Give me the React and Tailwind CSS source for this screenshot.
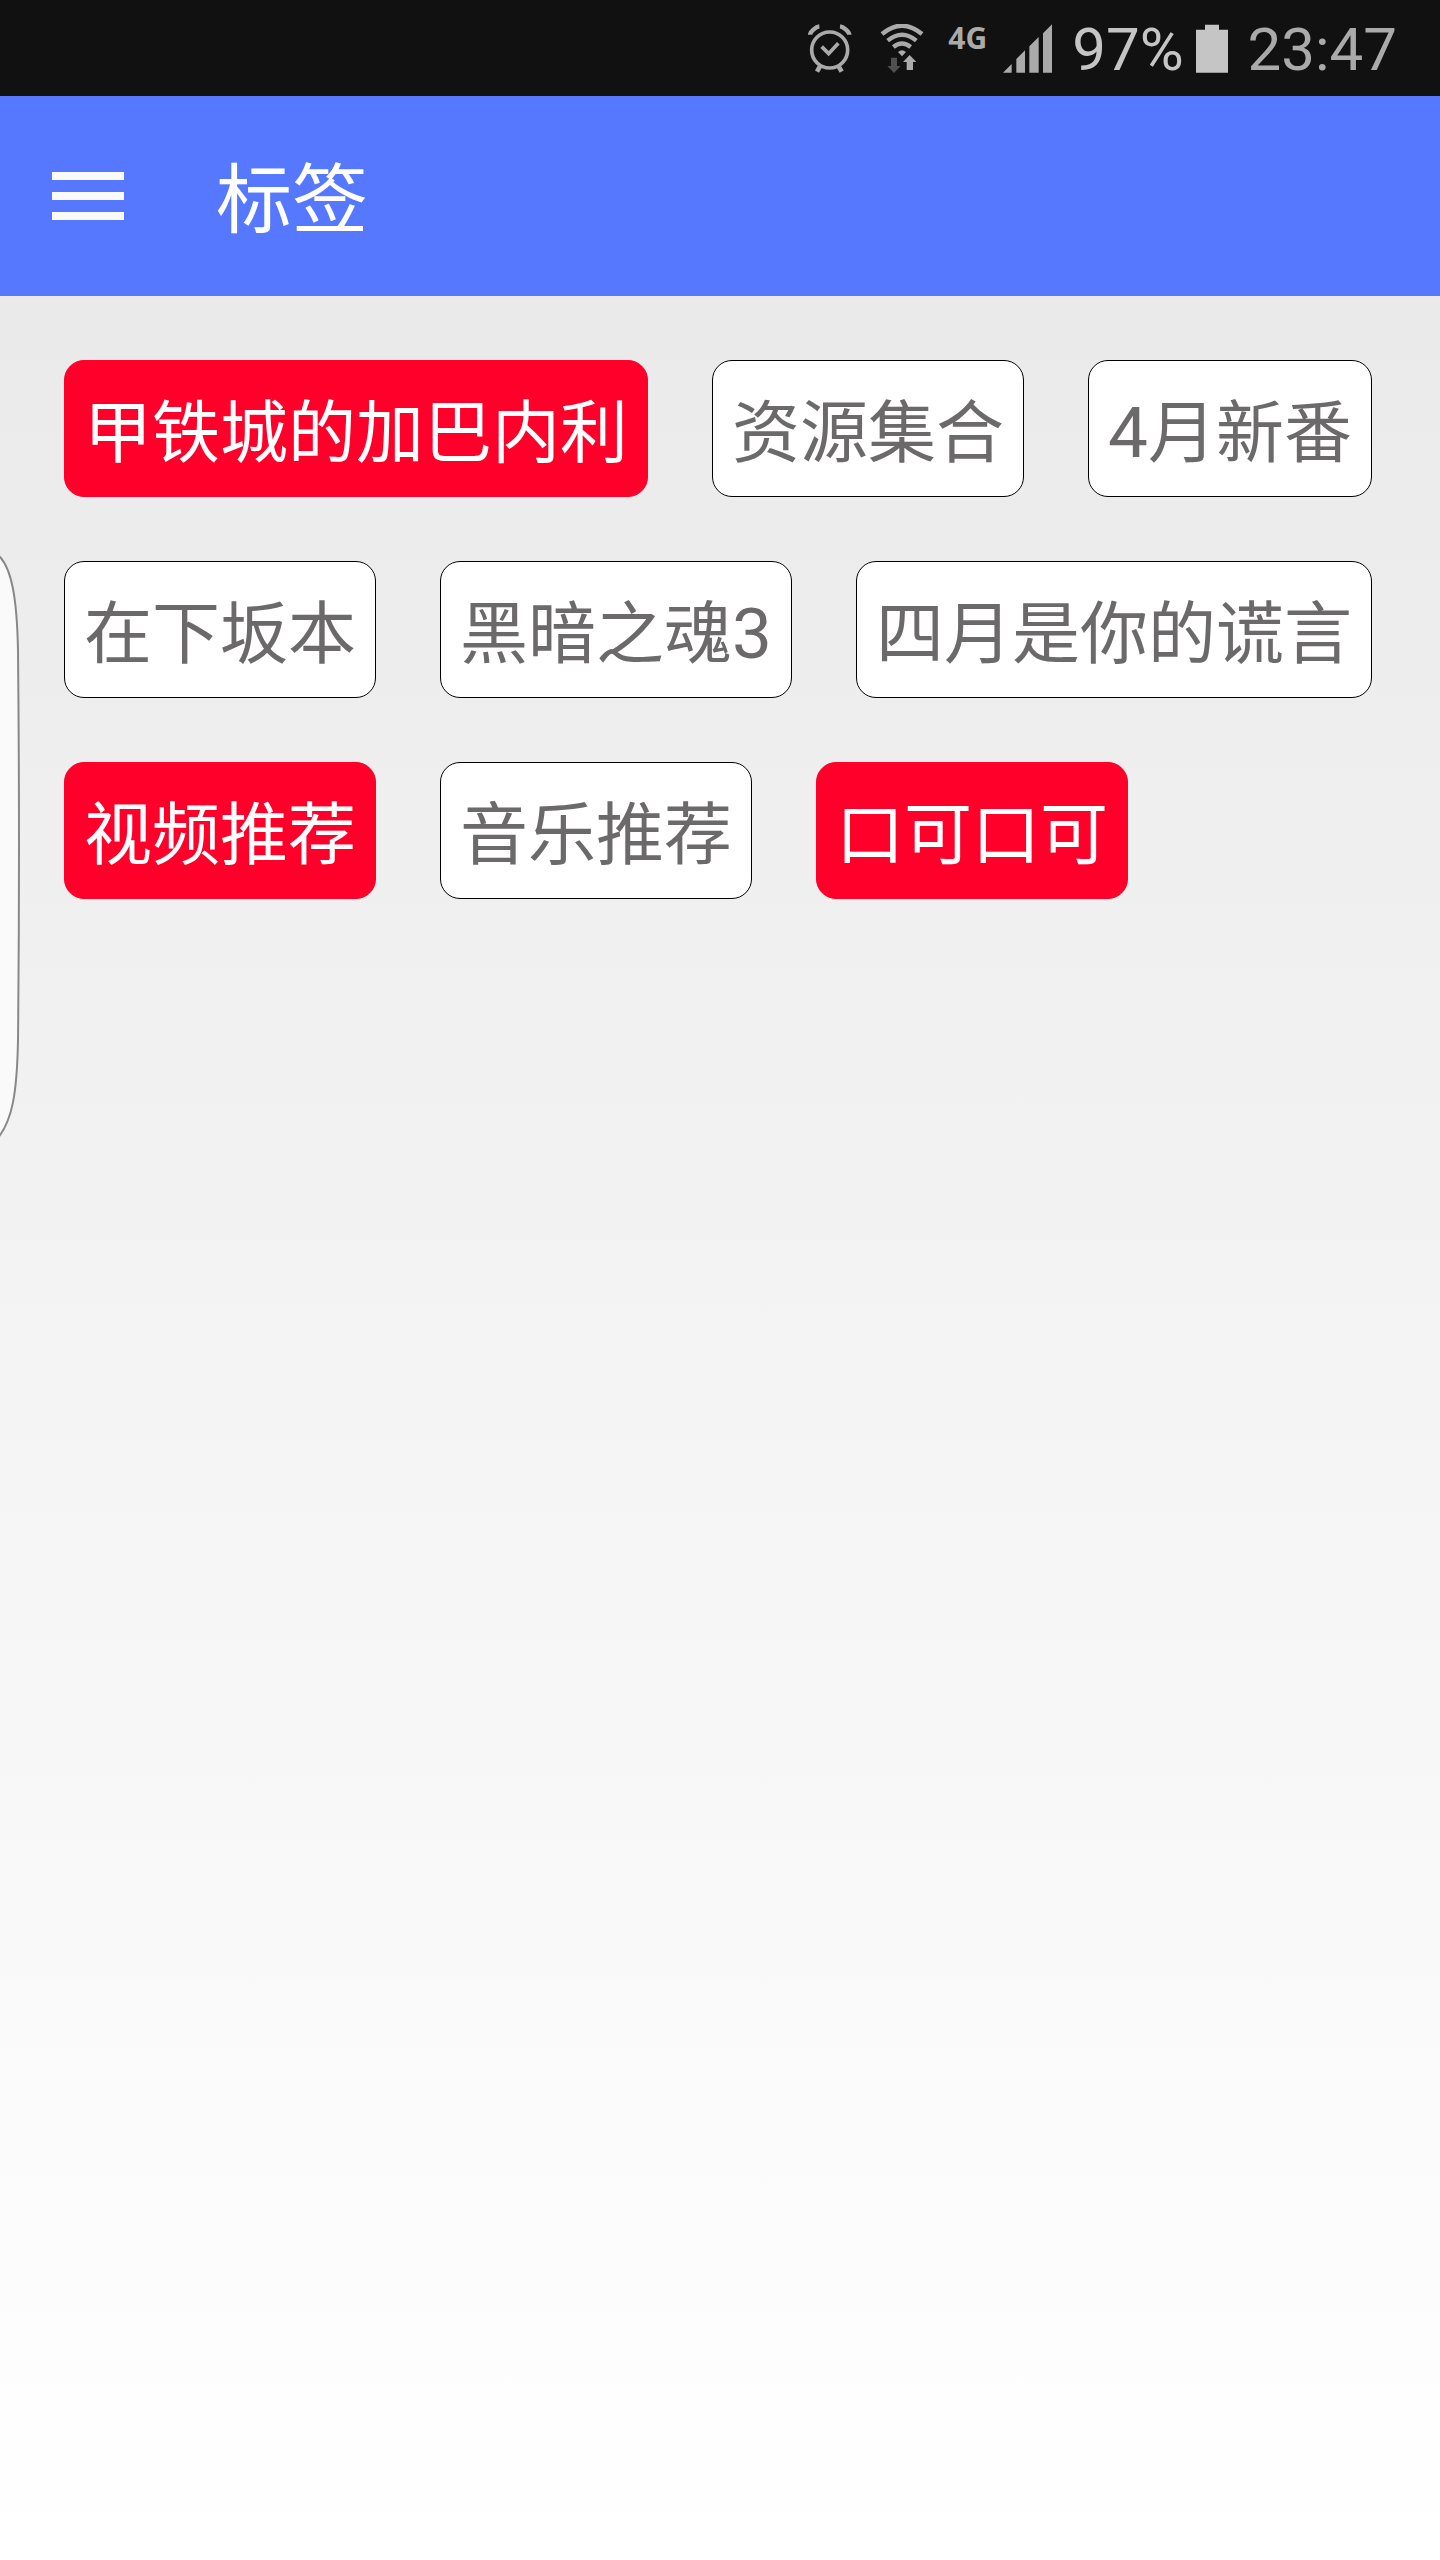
import { useState } from 'react';

const TAGS = [
  { name: '甲铁城的加巴内利', active: true },
  { name: '资源集合', active: false },
  { name: '4月新番', active: false },
  { name: '在下坂本', active: false },
  { name: '黑暗之魂3', active: false },
  { name: '四月是你的谎言', active: false },
  { name: '视频推荐', active: true },
  { name: '音乐推荐', active: false },
  { name: '口可口可', active: true },
];

function AlarmIcon() {
  return (
    <svg className="h-[49px] w-11" viewBox="60 70 132 147" fill="none" stroke="#aaaaaa" aria-hidden="true">
      <circle cx="125" cy="148" r="54" strokeWidth="11" />
      <path d="M101 138l21 21 29-31" strokeWidth="11" />
      <path d="M66 102c0-8 18-24 28-25M184 102c0-8-18-24-28-25" strokeWidth="13" />
      <path d="M96 197l-9 16M152 197l9 16" strokeWidth="14" />
    </svg>
  );
}

function WifiIcon() {
  return (
    <svg className="h-[49px] w-11" viewBox="272 70 132 147" fill="none" aria-hidden="true">
      <g stroke="#aaaaaa" strokeWidth="13">
        <path d="M278 100q60-50 120 0" />
        <path d="M295 120q43-36 86 0" />
        <path d="M312 139q26-21 52 0" />
      </g>
      <path d="M326 154q12-10 24 0l-12 13z" fill="#aaaaaa" />
      <path d="M305 171h18v25h11l-20 21-20-21h11z" fill="#505050" />
      <path d="M352 208h19v-24h10l-20-21-20 21h11z" fill="#aaaaaa" />
    </svg>
  );
}

function SignalIcon() {
  return (
    <svg className="h-[49px] w-[49px]" viewBox="639 70 147 147" fill="#aaaaaa" aria-hidden="true">
      <path d="M639 216l26-26v26zM679 216v-41l26-26v67zM718 216v-79l28-28v107zM759 216V98l27-27v145z" />
    </svg>
  );
}

function BatteryIcon() {
  return (
    <svg className="h-[49px] w-8" viewBox="438 70 96 147" fill="#c5c5c5" aria-hidden="true">
      <path d="M438 87h27V72h42v15h27v129h-96z" />
    </svg>
  );
}

function StatusBar() {
  return (
    <div className="flex h-24 items-center justify-end bg-[#111111] pr-[43px] font-[Roboto,sans-serif] text-[60px] leading-none text-[#aaaaaa]">
      <AlarmIcon />
      <span className="ml-7">
        <WifiIcon />
      </span>
      <span className="mb-5 ml-6 font-['Open_Sans',sans-serif] text-[30px] font-bold">4G</span>
      <span className="ml-4">
        <SignalIcon />
      </span>
      <span className="ml-5 pt-1 text-[#c5c5c5]">97%</span>
      <span className="ml-3">
        <BatteryIcon />
      </span>
      <span className="ml-5 pt-1">23:47</span>
    </div>
  );
}

function TagButton({ name, active, onClick }) {
  return (
    <button
      type="button"
      aria-pressed={active}
      onClick={onClick}
      className={`flex h-[137px] items-center rounded-[20px] border px-[19px] pb-0.5 text-[68px] leading-none whitespace-nowrap ${
        active ? 'border-[#ff002b] bg-[#ff002b] text-white' : 'border-black bg-white text-[#6b6969]'
      }`}
    >
      <span>
        {name.split(/(\d+)/).map((part, i) =>
          // latin digits are set a little larger than the hanzi beside them
          /\d/.test(part) ? (
            <span key={i} className="font-[Roboto,sans-serif] text-[71px] leading-[0]">
              {part}
            </span>
          ) : (
            part
          )
        )}
      </span>
    </button>
  );
}

export default function App() {
  const [tags, setTags] = useState(TAGS);

  function toggle(name) {
    setTags(tags.map((tag) => (tag.name === name ? { ...tag, active: !tag.active } : tag)));
  }

  return (
    <div className="relative flex min-h-screen flex-col font-['Noto_Sans_CJK_SC',sans-serif]">
      <StatusBar />
      <header className="flex h-[200px] items-center bg-[#5578ff] pl-[52px] text-white">
        <button type="button" aria-label="菜单">
          <svg className="h-12 w-[72px]" viewBox="0 0 72 48" fill="#fafafa" aria-hidden="true">
            <path d="M0 0h72v8H0zM0 20h72v8H0zM0 40h72v8H0z" />
          </svg>
        </button>
        <h1 className="ml-[92px] pb-1 text-[76px] leading-none">标签</h1>
      </header>
      <main className="flex-1 bg-linear-to-b from-[#eaeaea] to-white p-16">
        <div className="flex flex-wrap gap-16">
          {tags.map((tag) => (
            <TagButton key={tag.name} name={tag.name} active={tag.active} onClick={() => toggle(tag.name)} />
          ))}
        </div>
      </main>
      {/* pull-out handle on the left edge */}
      <svg className="absolute top-[550px] left-0 h-[592px] w-5" viewBox="0 0 20 592" fill="#fafafa" stroke="#888888" strokeWidth="2" aria-hidden="true">
        <path d="M-2 5C12 17 17 50 18 100Q20 300 18 490C17 545 12 570-2 588" />
      </svg>
    </div>
  );
}
